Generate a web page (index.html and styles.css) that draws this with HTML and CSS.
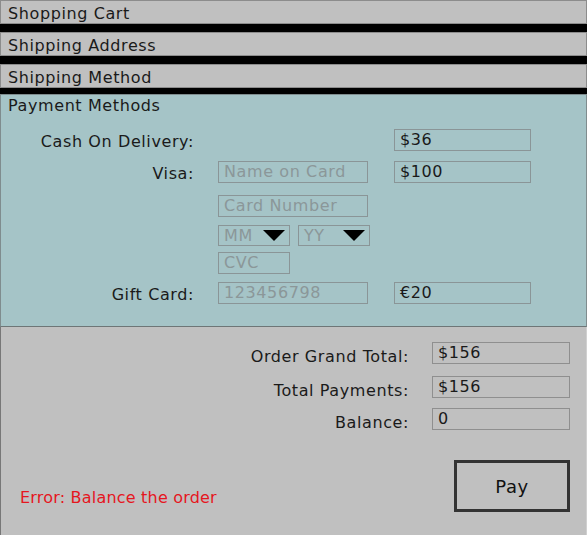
FILE: index.html
```html
<!DOCTYPE html>
<html lang="en">
<head>
    <meta charset="UTF-8">
    <meta name="viewport" content="width=device-width, initial-scale=1.0">
    <title>Checkout</title>
    <link rel="stylesheet" href="styles.css">
</head>
<body>
    <div class="checkout">
        <div class="step">Shopping Cart</div>
        <div class="step">Shipping Address</div>
        <div class="step step-last">Shipping Method</div>

        <div class="payment">
            <div class="payment-title">Payment Methods</div>
            <div class="pay-grid">
                <div class="label">Cash On Delivery:</div>
                <div></div>
                <div class="field">$36</div>

                <div class="label">Visa:</div>
                <div class="field placeholder">Name on Card</div>
                <div class="field">$100</div>

                <div></div>
                <div class="field placeholder">Card Number</div>
                <div></div>

                <div></div>
                <div class="expiry">
                    <div class="field select placeholder">MM <span class="arrow"></span></div>
                    <div class="field select placeholder">YY <span class="arrow"></span></div>
                </div>
                <div></div>

                <div></div>
                <div class="field short placeholder">CVC</div>
                <div></div>

                <div class="label">Gift Card:</div>
                <div class="field placeholder">123456798</div>
                <div class="field">€20</div>
            </div>
        </div>

        <div class="summary">
            <div class="totals">
                <div class="label">Order Grand Total:</div>
                <div class="field">$156</div>
                <div class="label">Total Payments:</div>
                <div class="field">$156</div>
                <div class="label">Balance:</div>
                <div class="field">0</div>
            </div>
            <div class="actions">
                <div class="error">Error: Balance the order</div>
                <button class="pay-btn">Pay</button>
            </div>
        </div>
    </div>
</body>
</html>
```

FILE: styles.css
```css
html, body {
    margin: 0;
    padding: 0;
    background: #000;
}

body {
    font-family: "DejaVu Sans", sans-serif;
    font-size: 16px;
    letter-spacing: 0.6px;
    color: #1a1a1a;
}

.checkout {
    width: 587px;
    height: 535px;
    display: flex;
    flex-direction: column;
    background: #000;
}

.step {
    height: 20px;
    line-height: 22px;
    margin-bottom: 8px;
    padding: 2px 0 0 7px;
    background: #c0c0c0;
    border: 1px solid #8c8c8c;
}

.step-last {
    margin-bottom: 6px;
}

.payment {
    height: 231px;
    background: #a5c4c7;
    border: 1px solid #7f8c8e;
    border-bottom-color: #6e7677;
}

.payment-title {
    height: 22px;
    line-height: 22px;
    padding-left: 7px;
}

.pay-grid {
    display: grid;
    grid-template-columns: 193px 152px 137px;
    grid-template-rows: 32px 34px 30px 27px 30px 22px;
    column-gap: 24px;
    margin-top: 12px;
    align-items: start;
}

.label {
    text-align: right;
    line-height: 22px;
    padding-top: 2px;
}

.field {
    box-sizing: border-box;
    height: 22px;
    line-height: 20px;
    padding-left: 5px;
    border: 1px solid #8a9597;
    white-space: nowrap;
    overflow: hidden;
}

.pay-grid .field {
    width: 137px;
}

.pay-grid > .field:nth-child(3n+2) {
    width: 150px;
}

.pay-grid > .field.short {
    width: 72px;
}

.placeholder {
    color: #8b9799;
}

.expiry {
    display: flex;
    gap: 8px;
}

.select {
    width: 72px;
    height: 21px;
    display: flex;
    align-items: center;
    justify-content: space-between;
    padding-right: 4px;
}

.arrow {
    width: 0;
    height: 0;
    border-left: 11px solid transparent;
    border-right: 11px solid transparent;
    border-top: 11px solid #000;
}

.summary {
    flex: 1;
    background: #c0c0c0;
    border-left: 1px solid #777;
    border-right: 1px solid #d0d0d0;
    display: flex;
    flex-direction: column;
}

.totals {
    display: grid;
    grid-template-columns: 1fr 138px;
    grid-template-rows: 34px 32px 22px;
    column-gap: 23px;
    padding: 15px 16px 0 0;
    align-items: start;
}

.totals .label {
    padding-top: 4px;
}

.totals .field {
    border-color: #8f8f8f;
}

.actions {
    display: flex;
    justify-content: space-between;
    align-items: center;
    margin-top: 30px;
    padding: 0 16px 0 19px;
}

.error {
    color: #e5161e;
    letter-spacing: 0.2px;
    margin-top: 22px;
}

.pay-btn {
    width: 116px;
    height: 52px;
    background: #c0c0c0;
    border: 3px solid #333;
    font-family: "DejaVu Sans", sans-serif;
    font-size: 18px;
    letter-spacing: 0.6px;
    color: #111;
}
```
